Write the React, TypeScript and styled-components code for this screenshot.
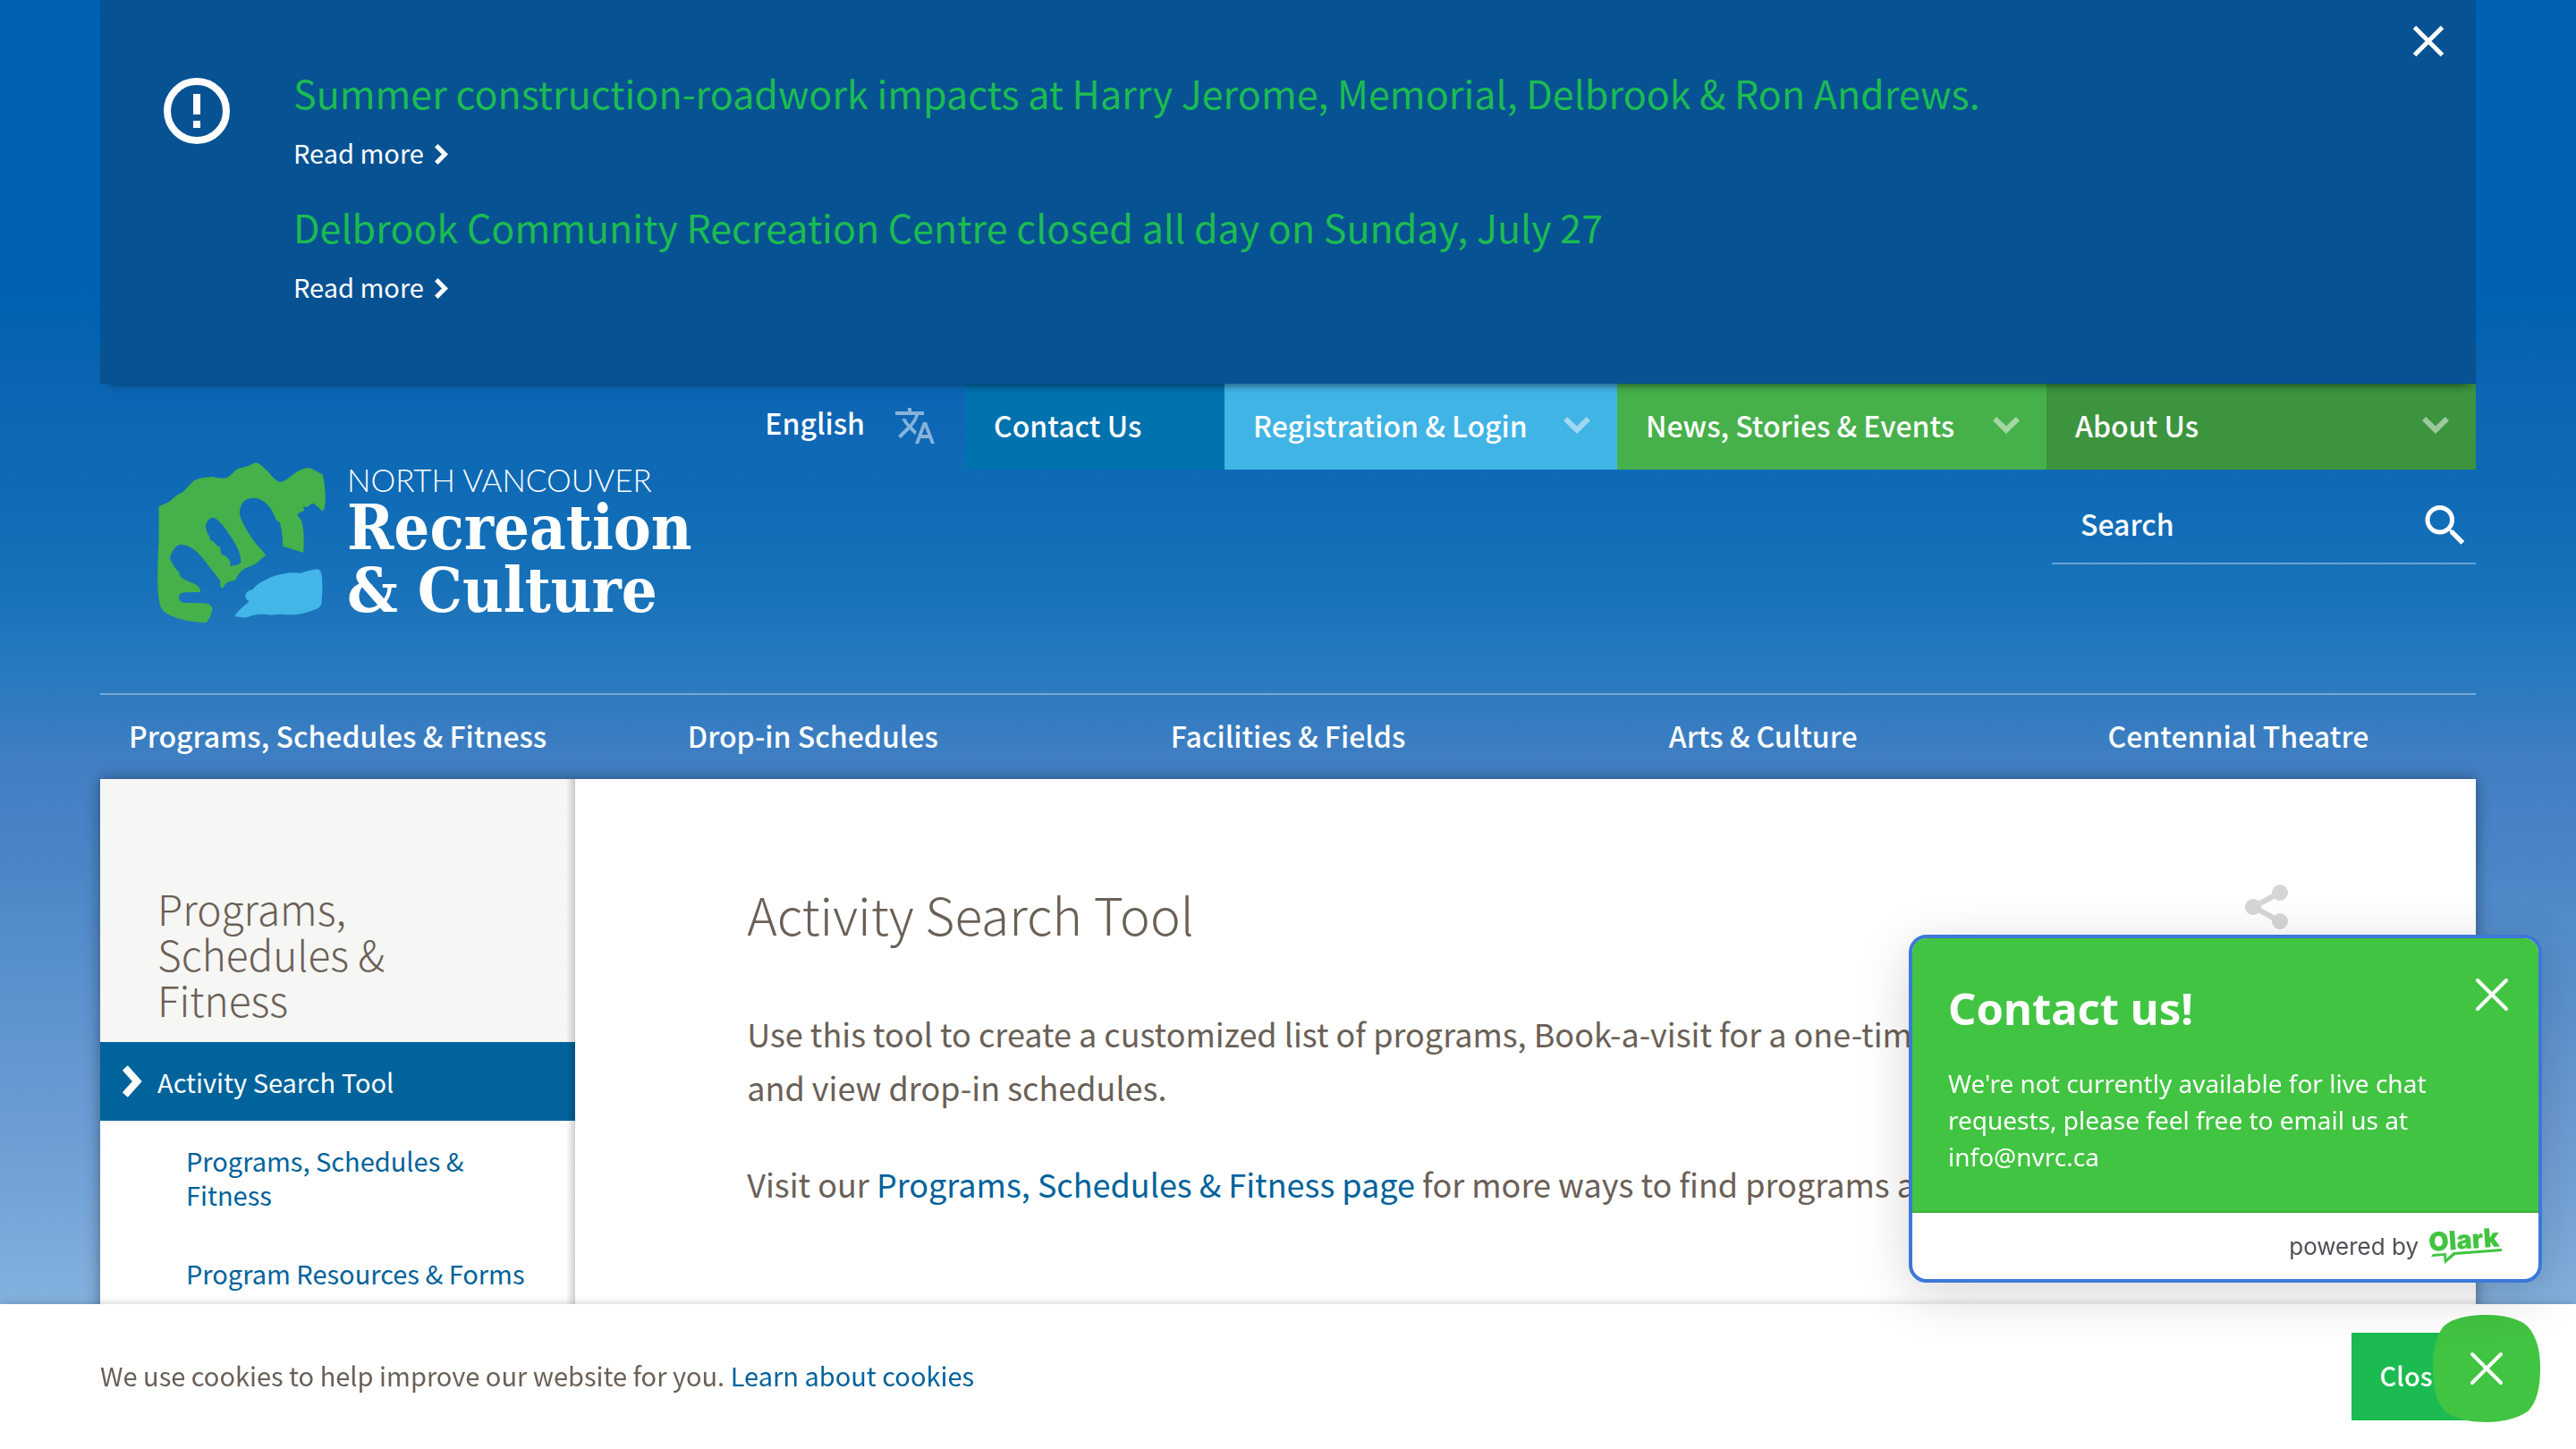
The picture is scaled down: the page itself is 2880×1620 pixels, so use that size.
import React, { useState } from 'react';
import styled, { createGlobalStyle } from 'styled-components';
import { MdTranslate } from 'react-icons/md';

const sans = `"Noto Sans CJK SC", "Open Sans", sans-serif`;
const ink = '#6a6056';
const link = '#00629b';

const GlobalStyle = createGlobalStyle`
  *, *::before, *::after { box-sizing: border-box; }
  body {
    margin: 0;
    font-family: ${sans};
    color: ${ink};
  }
  h1, h2, h3, p, ul { margin: 0; padding: 0; }
  ul { list-style: none; }
  a { color: ${link}; text-decoration: none; }
  svg { display: block; flex: none; }
  button {
    margin: 0;
    padding: 0;
    border: 0;
    background: none;
    color: inherit;
    font: inherit;
    cursor: pointer;
  }
`;

const Page = styled.div`
  display: flex;
  flex-direction: column;
  min-height: 100vh;
  padding: 0 112px;
  background: linear-gradient(
    #0061b2 0%, #0061b2 20%, #0e67b5 29%, #0f6bb6 34%, #1671b9 40%, #2779be 46%,
    #427fc3 53%, #4b87c7 60%, #6d9cd5 78%, #83b1dd 90%, #90bae0 100%
  );
`;

/* Alert banner */

const Alert = styled.section`
  position: relative;
  display: flex;
  align-items: flex-start;
  padding: 73px 36px 88px 71px;
  background: #065293;
  box-shadow: 0 10px 10px -10px rgba(0, 0, 0, 0.5);
  color: #fff;
`;

const AlertIcon = styled.svg`
  width: 74px;
  height: 74px;
  margin: 14px 71px 0 0;
`;

const AlertList = styled.ul`
  flex: 1;
  display: flex;
  flex-direction: column;
  gap: 32px;
`;

const AlertTitle = styled.h2`
  margin-bottom: 16px;
  color: #1cbb52;
  font-size: 43px;
  font-weight: 400;
  line-height: 60px;
`;

const ReadMore = styled.a`
  display: flex;
  align-items: center;
  gap: 12px;
  color: #fff;
  font-size: 29px;
  line-height: 42px;

  svg { margin-top: 4px; }
`;

const AlertClose = styled.button`
  position: absolute;
  top: 28px;
  right: 35px;
`;

/* Header */

const Header = styled.header`
  display: flex;
  justify-content: space-between;
  height: 346px;
`;

const Logo = styled.a`
  display: flex;
  align-items: flex-start;
  gap: 24px;
  padding: 88px 0 0 64px;
  color: #fff;
`;

const LogoWords = styled.span`
  display: flex;
  flex-direction: column;
`;

const LogoSmall = styled.span`
  font-family: Lato, sans-serif;
  font-size: 35px;
  font-weight: 300;
  line-height: 38px;
`;

const LogoLarge = styled.span`
  font-family: "DejaVu Serif Condensed", "DejaVu Serif", serif;
  font-size: 70px;
  font-weight: 700;
  line-height: 70px;
`;

const HeaderTools = styled.div`
  display: flex;
  flex-direction: column;
  align-items: flex-end;
`;

const TopBar = styled.nav`
  display: flex;
  height: 96px;
`;

const Language = styled.button`
  display: flex;
  align-items: center;
  gap: 32px;
  padding: 0 32px 10px 0;
  color: #fff;
  font-size: 32px;
  font-weight: 500;
  line-height: 48px;

  svg { opacity: 0.5; margin-top: 8px; }
`;

const TopLink = styled.a<{ $bg: string; $width: number }>`
  display: flex;
  align-items: center;
  justify-content: space-between;
  width: ${p => p.$width}px;
  padding: 0 30px 4px 32px;
  background: ${p => p.$bg};
  box-shadow: inset 0 10px 8px -8px rgba(0, 0, 0, 0.2);
  color: #fff;
  font-size: 32px;
  font-weight: 500;
  line-height: 48px;

  svg { opacity: 0.5; }
`;

const Search = styled.form`
  display: flex;
  align-items: center;
  width: 474px;
  margin-top: 30px;
  padding: 0 4px 14px 32px;
  border-bottom: 2px solid rgba(255, 255, 255, 0.35);
  color: #fff;
`;

const SearchInput = styled.input`
  flex: 1;
  min-width: 0;
  height: 60px;
  padding: 0;
  border: 0;
  outline: 0;
  background: none;
  color: #fff;
  font-family: ${sans};
  font-size: 32px;
  font-weight: 500;

  &::placeholder { color: #fff; opacity: 1; }
`;

const MainNav = styled.nav`
  display: grid;
  grid-template-columns: repeat(5, 1fr);
  height: 96px;
  border-top: 2px solid rgba(255, 255, 255, 0.35);
`;

const NavLink = styled.a`
  display: flex;
  align-items: center;
  justify-content: center;
  padding-bottom: 4px;
  color: #fff;
  font-size: 32px;
  font-weight: 500;
`;

/* Content */

const Panel = styled.div`
  flex: 1;
  display: grid;
  grid-template-columns: 1fr 4fr;
  background: #fff;
  box-shadow: 0 0 16px rgba(0, 0, 0, 0.4);
`;

const Sidebar = styled.aside`
  position: relative;

  &::after {
    content: '';
    position: absolute;
    inset: 0 0 0 auto;
    width: 10px;
    background: linear-gradient(to left, rgba(0, 0, 0, 0.18), rgba(0, 0, 0, 0));
  }
`;

const SideTitle = styled.h2`
  padding: 119px 64px 22px;
  background: #f6f6f4;
  font-size: 46px;
  font-weight: 300;
  line-height: 51px;
`;

const SideCurrent = styled.a`
  display: flex;
  align-items: center;
  gap: 17px;
  height: 88px;
  padding-left: 25px;
  background: #00639c;
  color: #fff;
  font-size: 29px;
`;

const SideLink = styled.a`
  display: block;
  padding: 25px 32px 25px 96px;
  font-size: 29px;
  line-height: 38px;
`;

const Main = styled.main`
  padding: 114px 208px 200px 192px;
`;

const TitleRow = styled.div`
  display: flex;
  align-items: flex-start;
  justify-content: space-between;
  margin-bottom: 68px;
`;

const Title = styled.h1`
  font-size: 57px;
  font-weight: 300;
  line-height: 72px;
`;

const Share = styled.button`
  padding-top: 3px;
  color: #d6d6d6;
`;

const Text = styled.p`
  margin-bottom: 48px;
  font-size: 36px;
  line-height: 60px;
`;

/* Cookie notice */

const CookieBar = styled.section`
  position: fixed;
  inset: auto 0 0 0;
  display: flex;
  align-items: center;
  justify-content: space-between;
  padding: 32px 112px;
  background: #fff;
  box-shadow: 0 0 10px rgba(0, 0, 0, 0.2);
`;

const CookieText = styled.p`
  padding-bottom: 4px;
  font-size: 29px;
  line-height: 44px;
`;

const CookieClose = styled.button`
  height: 98px;
  padding: 0 32px 4px;
  background: #1cbb52;
  color: #fff;
  font-size: 29px;
  font-weight: 500;
`;

/* Chat */

const Launcher = styled.button`
  position: fixed;
  right: 40px;
  bottom: 30px;
`;

const Chat = styled.section`
  position: fixed;
  right: 38px;
  bottom: 186px;
  width: 708px;
  overflow: hidden;
  border: 4px solid #3c78d8;
  border-radius: 20px;
  background: #fff;
  box-shadow: 0 14px 60px rgba(0, 0, 0, 0.16);
  font-family: "Noto Sans", "Open Sans", sans-serif;
`;

const ChatBody = styled.div`
  padding: 45px 34px 40px 40px;
  border-bottom: 2px solid #3ab13a;
  background: #41c441;
  color: #fff;
`;

const ChatHead = styled.div`
  display: flex;
  align-items: flex-start;
  justify-content: space-between;
  margin-bottom: 31px;
`;

const ChatTitle = styled.h3`
  font-size: 49px;
  font-weight: 700;
  line-height: 66px;
`;

const ChatText = styled.p`
  font-size: 28px;
  line-height: 41px;
`;

const ChatFoot = styled.footer`
  display: flex;
  align-items: center;
  justify-content: flex-end;
  gap: 12px;
  height: 74px;
  padding-right: 34px;
  color: #4e5056;
  font-family: Inter, sans-serif;
  font-size: 26px;
`;

const Chevron = ({ w, h, s, down }: { w: number; h: number; s: number; down?: boolean }) => {
  const end = s * 0.36;
  const tip = s * 0.71;
  const d = down
    ? `M${end} ${end}L${w / 2} ${h - tip}L${w - end} ${end}`
    : `M${end} ${end}L${w - tip} ${h / 2}L${end} ${h - end}`;
  return (
    <svg width={w} height={h} viewBox={`0 0 ${w} ${h}`} fill="none" stroke="currentColor" strokeWidth={s} aria-hidden="true">
      <path d={d} />
    </svg>
  );
};

const Cross = ({ size, s, round }: { size: number; s: number; round?: boolean }) => {
  const a = s / 2;
  const b = size - a;
  return (
    <svg width={size} height={size} viewBox={`0 0 ${size} ${size}`} stroke="currentColor" strokeWidth={s} strokeLinecap={round ? 'round' : 'butt'} aria-hidden="true">
      <path d={`M${a} ${a}L${b} ${b}M${b} ${a}L${a} ${b}`} />
    </svg>
  );
};

const Emblem = () => (
  <svg width="188" height="179" viewBox="18 36 563 537" aria-hidden="true">
    <path
      fill="#46b04a"
      fillRule="evenodd"
      d="M22 183L22 300Q18 360 18 430Q19 500 30 525Q40 545 90 560Q140 573 182 573Q202 545 202 525Q198 510 170 508L110 507Q90 505 89 489Q90 473 110 472L162 471Q162 455 145 445Q120 435 100 424Q90 415 90 404Q70 385 59 356Q75 311 97 311Q135 313 170 358L228 433L228 451L236 459Q245 440 260 435L278 431Q295 400 312 391Q350 378 362 362L381 348Q380 343 345 305Q295 235 293 205Q295 155 342 155Q390 158 415 228L428 238Q438 275 438 317L507 339Q512 260 500 230Q490 218 487 213Q495 200 510 199L507 184L522 186Q528 174 542 173L572 200Q581 190 581 150Q580 110 572 77Q550 63 526 54Q500 55 475 75Q445 100 430 102Q418 100 400 80Q365 40 350 37Q340 36 328 46Q310 52 285 58Q258 85 248 88Q230 92 200 84Q160 87 140 97L102 136Q85 142 60 166Q45 176 22 183ZM203 221Q185 222 179 250Q182 275 193 285L195 296L208 303Q215 317 227 319L232 345Q255 350 262 370L262 384L285 380L297 373Q300 340 270 295Q225 222 203 221Z"
    />
    <path
      fill="#43b5e7"
      d="M338 462Q345 445 400 420Q450 402 498 407Q530 396 555 394Q568 396 570 425Q573 470 568 510Q565 525 540 532Q500 548 460 547Q420 543 400 548Q365 542 340 548L312 557L276 552Q290 530 326 502Q312 495 312 482Q315 466 338 462Z"
    />
  </svg>
);

const OlarkLogo = () => (
  <svg width="88" height="56" viewBox="0 -8 88 56" fill="#41c441" role="img" aria-label="Olark">
    <text x="0" y="26" transform="rotate(-4 0 26)" fontFamily="Inter, sans-serif" fontWeight="900" fontSize="29">Olark</text>
    <path d="M4 29L19 28V34L27 27L81 23V26L29 30L17 40L16 31L2 32Z" />
  </svg>
);

const topLinks = [
  { label: 'Contact Us', bg: '#0072ae', width: 290, menu: false },
  { label: 'Registration & Login', bg: '#41b4e6', width: 439, menu: true },
  { label: 'News, Stories & Events', bg: '#46b04a', width: 480, menu: true },
  { label: 'About Us', bg: '#3c943f', width: 480, menu: true },
];

const navLinks = [
  'Programs, Schedules & Fitness',
  'Drop-in Schedules',
  'Facilities & Fields',
  'Arts & Culture',
  'Centennial Theatre',
];

const alerts = [
  'Summer construction-roadwork impacts at Harry Jerome, Memorial, Delbrook & Ron Andrews.',
  'Delbrook Community Recreation Centre closed all day on Sunday, July 27',
];

export default function App() {
  const [alertOpen, setAlertOpen] = useState(true);
  const [cookiesOpen, setCookiesOpen] = useState(true);
  const [chatOpen, setChatOpen] = useState(true);

  return (
    <>
      <GlobalStyle />
      <Page>
        {alertOpen && (
          <Alert aria-label="Alerts">
            <AlertIcon viewBox="0 0 74 74" aria-hidden="true">
              <circle cx="37" cy="37" r="33" fill="none" stroke="#fff" strokeWidth="8" />
              <path d="M33 18h8v23h-8zM33 48h8v8h-8z" fill="#fff" />
            </AlertIcon>
            <AlertList>
              {alerts.map(title => (
                <li key={title}>
                  <AlertTitle>{title}</AlertTitle>
                  <ReadMore href="#alert">
                    Read more
                    <Chevron w={15} h={23} s={5} />
                  </ReadMore>
                </li>
              ))}
            </AlertList>
            <AlertClose aria-label="Close alerts" onClick={() => setAlertOpen(false)}>
              <Cross size={36} s={5} />
            </AlertClose>
          </Alert>
        )}

        <Header>
          <Logo href="#home">
            <Emblem />
            <LogoWords>
              <LogoSmall>NORTH VANCOUVER</LogoSmall>
              <LogoLarge>Recreation</LogoLarge>
              <LogoLarge>&amp; Culture</LogoLarge>
            </LogoWords>
          </Logo>
          <HeaderTools>
            <TopBar aria-label="Quick links">
              <Language>
                English
                <MdTranslate size={48} />
              </Language>
              {topLinks.map(l => (
                <TopLink key={l.label} href="#top" $bg={l.bg} $width={l.width}>
                  {l.label}
                  {l.menu && <Chevron w={30} h={19} s={6} down />}
                </TopLink>
              ))}
            </TopBar>
            <Search role="search" onSubmit={e => e.preventDefault()}>
              <SearchInput type="text" placeholder="Search" aria-label="Search" />
              <button type="submit" aria-label="Submit search">
                <svg width="60" height="60" viewBox="0 -1 24 24" fill="currentColor" aria-hidden="true">
                  <path d="M15.5 14h-.79l-.28-.27A6.47 6.47 0 0 0 16 9.500 6.500 6.500 0 1 0 9.500 16c1.610 0 3.090-.590 4.230-1.570l.270.280v.790l5 4.990L20.490 19l-4.990-5zm-6 0C7.010 14 5 11.990 5 9.500S7.010 5 9.500 5 14 7.010 14 9.500 11.990 14 9.500 14z" />
                </svg>
              </button>
            </Search>
          </HeaderTools>
        </Header>

        <MainNav aria-label="Main">
          {navLinks.map(label => (
            <NavLink key={label} href="#section">{label}</NavLink>
          ))}
        </MainNav>

        <Panel>
          <Sidebar>
            <SideTitle>Programs, Schedules &amp; Fitness</SideTitle>
            <SideCurrent href="#activity-search" aria-current="page">
              <Chevron w={22} h={36} s={8} />
              Activity Search Tool
            </SideCurrent>
            <ul>
              <li><SideLink href="#programs">Programs, Schedules &amp; Fitness</SideLink></li>
              <li><SideLink href="#resources">Program Resources &amp; Forms</SideLink></li>
            </ul>
          </Sidebar>
          <Main>
            <TitleRow>
              <Title>Activity Search Tool</Title>
              <Share aria-label="Share">
                <svg width="52" height="52" viewBox="0 0 52 52" fill="currentColor" aria-hidden="true">
                  <path d="M41 10L11 26L41 42" fill="none" stroke="currentColor" strokeWidth="6" />
                  <circle cx="41" cy="10" r="9" />
                  <circle cx="11" cy="26" r="9" />
                  <circle cx="41" cy="42" r="9" />
                </svg>
              </Share>
            </TitleRow>
            <Text>
              Use this tool to create a customized list of programs, Book-a-visit for a one-time drop-in visit, register
              and view drop-in schedules.
            </Text>
            <Text>
              Visit our <a href="#programs">Programs, Schedules &amp; Fitness page</a> for more ways to find programs and
              activities.
            </Text>
          </Main>
        </Panel>
      </Page>

      {cookiesOpen && (
        <CookieBar aria-label="Cookie notice">
          <CookieText>
            We use cookies to help improve our website for you. <a href="#cookies">Learn about cookies</a>
          </CookieText>
          <CookieClose onClick={() => setCookiesOpen(false)}>Close</CookieClose>
        </CookieBar>
      )}

      <Launcher aria-label="Toggle chat" onClick={() => setChatOpen(!chatOpen)}>
        <svg width="120" height="120" viewBox="0 0 120 120" aria-hidden="true">
          <path
            fill="#41c441"
            d="M60 0C78 0 97 4 106 13C117 25 120 42 120 60C120 82 116 98 106 108C94 116 78 120 60 120C40 120 22 116 12 106C3 96 0 78 0 60C0 38 4 24 11 14C20 4 40 0 60 0Z"
          />
          <path d="M44 44L76 76M76 44L44 76" stroke="#fff" strokeWidth="4" strokeLinecap="round" />
        </svg>
      </Launcher>

      {chatOpen && (
        <Chat aria-label="Chat">
          <ChatBody>
            <ChatHead>
              <ChatTitle>Contact us!</ChatTitle>
              <button aria-label="Close chat" onClick={() => setChatOpen(false)}>
                <Cross size={36} s={4} round />
              </button>
            </ChatHead>
            <ChatText>
              We're not currently available for live chat requests, please feel free to email us at info@nvrc.ca
            </ChatText>
          </ChatBody>
          <ChatFoot>
            powered by
            <OlarkLogo />
          </ChatFoot>
        </Chat>
      )}
    </>
  );
}
